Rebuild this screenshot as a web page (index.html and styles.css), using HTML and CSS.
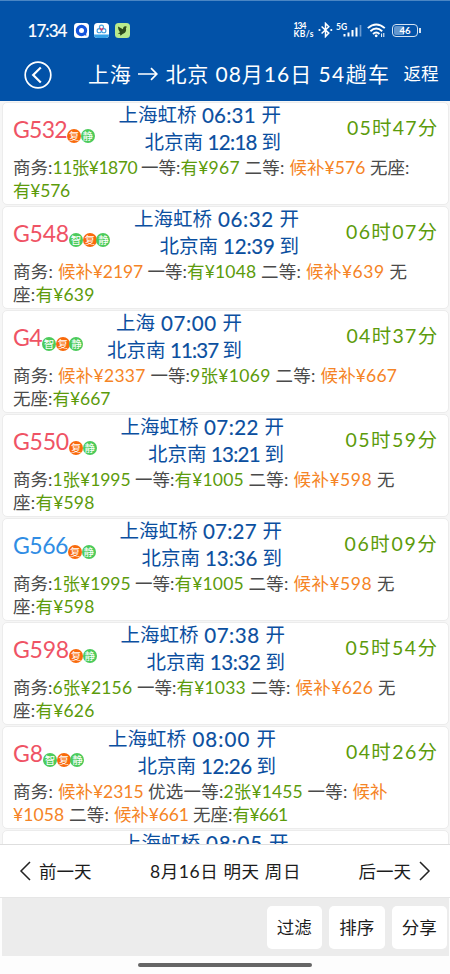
FILE: index.html
```html
<!DOCTYPE html>
<html lang="zh-CN">
<head>
<meta charset="utf-8">
<title>上海 → 北京</title>
<link rel="stylesheet" href="styles.css">
</head>
<body>
<header class="header">
  <div class="status">
    <span class="clock" data-w="39">17:34</span>
    <svg class="app" viewBox="0 0 15 15"><rect width="15" height="15" rx="3.5" fill="#fff"/><circle cx="7.5" cy="7.5" r="4.1" fill="none" stroke="#1454dc" stroke-width="3.2"/><path d="M10 12l2.5.8-.6-3z" fill="#1454dc"/></svg>
    <svg class="app" viewBox="0 0 15 15"><rect width="15" height="15" rx="3.5" fill="#fff"/><path d="M0 11.5h15a3.5 3.5 0 0 1-3.5 3.5h-8A3.5 3.5 0 0 1 0 11.5z" fill="#36a2e8"/><g fill="none" stroke-width="1.1"><circle cx="7.5" cy="4.2" r="2.1" stroke="#4aa8e0"/><circle cx="5.2" cy="7.7" r="2.1" stroke="#3c9ce0"/><circle cx="9.8" cy="7.7" r="2.1" stroke="#3c9ce0"/></g><path d="M5.8 5l1.7 2 1.7-2" fill="none" stroke="#e03c68" stroke-width="1.3"/></svg>
    <svg class="app" viewBox="0 0 15 15"><rect width="15" height="15" rx="3.5" fill="#b9ea8c"/><path d="M3 3.5l5 2.8c0-2 1-3.300 2.600-3.100l1.500.8-1.200.7c.8 3.300-.6 5.500-3 6l-2.400 2.100-.5-1.900-2.200-.4 2.300-1.300C3.800 8 3 5.500 3 3.500z" fill="#2c4a1c"/></svg>
    <span class="grow"></span>
    <span class="rate"><span data-w="16">134</span><span data-w="20.5">KB/s</span></span>
    <svg class="bt" viewBox="0 0 15 16"><path d="M3.600 4.500l7.200 6.600L7.500 14.600V1.400l3.300 3.400-7.200 6.700" fill="none" stroke="#fff" stroke-width="1.5"/><circle cx="1.500" cy="8" r="1.100" fill="#fff"/><circle cx="13.300" cy="8" r="1.100" fill="#fff"/></svg>
    <span class="cell"><span class="gen">5G</span><svg class="bars" viewBox="0 0 19 12"><path d="M1.500 9v2.500M5.500 7.500v4M9.500 5v6.500M13.500 2.500v9" stroke="#fff" stroke-width="2"/><path d="M17.500 0v11.500" stroke="#6c9ad0" stroke-width="1.700"/></svg></span>
    <svg class="wifi" viewBox="0 0 19 15"><g fill="none" stroke="#fff" stroke-width="1.900"><path d="M.8 5.100Q9.200-2.300 17.800 5.100"/><path d="M3.400 8.200Q9.200 3 15.200 8.200"/><path d="M6 11Q9.200 8 12.500 11"/></g><circle cx="9.200" cy="12.800" r="1.400" fill="#fff"/><path d="M14.600 14v-3.500M16.800 10v4" stroke="#fff" stroke-width="1"/></svg>
    <span class="battery"><span class="level">46</span></span>
  </div>
  <div class="title-bar">
    <svg class="back" viewBox="0 0 28 28"><circle cx="14" cy="14" r="12.800" fill="none" stroke="#fff" stroke-width="1.700"/><path d="M16.800 6.500L9.200 14l7.600 7.500" fill="none" stroke="#fff" stroke-width="2.200"/></svg>
    <h1 class="title"><span data-w="50">上海 </span><svg class="arrow" viewBox="0 0 20 14"><path d="M0 7h18.500M13 1.200L18.800 7 13 12.800" fill="none" stroke="#fff" stroke-width="1.700"/></svg><span data-w="50">北京 </span><span data-w="103">08月16日 </span><span data-w="72">54趟车</span></h1>
    <span class="return">返程</span>
  </div>
</header>
<main class="list" id="list"></main>
<nav class="days">
  <span class="day"><svg class="chev" viewBox="0 0 12 20"><path d="M11 1L2 10l9 9" fill="none" stroke="#222" stroke-width="1.500"/></svg>前一天</span>
  <span class="today" data-w="151">8月16日 明天 周日</span>
  <span class="day">后一天<svg class="chev" viewBox="0 0 12 20"><path d="M1 1l9 9-9 9" fill="none" stroke="#222" stroke-width="1.500"/></svg></span>
</nav>
<footer class="tools">
  <button>过滤</button><button>排序</button><button>分享</button>
</footer>
<div class="gesture"><i></i></div>
<script src="app.js"></script>
</body>
</html>
```
FILE: styles.css
```css
* { box-sizing: border-box; }
body {
  margin: 0;
  width: 450px;
  height: 974px;
  overflow: hidden;
  display: flex;
  flex-direction: column;
  background: #fdfdfd;
  font-family: Lato, "Noto Sans CJK SC", sans-serif;
  color: #1c1c1c;
}
svg { display: block; flex: none; }
[data-w] { display: inline-block; white-space: pre; }
.grow { flex: 1; }

.header {
  flex: none;
  height: 101px;
  background: #0252a8;
  border-top: 1px solid #4a86c4;
  color: #fff;
}
.status {
  display: flex;
  align-items: center;
  height: 58px;
  padding: 0 28.500px 0 27.500px;
}
.clock { font-size: 17px; margin-right: 7px; -webkit-text-stroke: .2px; }
.app { width: 15px; height: 15px; margin-right: 5.500px; }
.rate {
  display: flex;
  flex-direction: column;
  font-size: 8.500px;
  line-height: 8px;
  font-weight: 700;
  margin-right: 4px;
}
.bt { width: 15px; height: 16px; margin-right: 3px; }
.cell { display: flex; align-items: flex-start; height: 15px; width: 27px; margin-right: 4px; }
.gen { font-size: 8.500px; line-height: 8px; font-weight: 700; width: 7px; }
.bars { width: 19px; height: 12px; margin-top: 2.500px; }
.wifi { width: 19px; height: 15px; margin-right: 6px; }
.battery {
  position: relative;
  width: 26px;
  height: 13px;
  border: 1.500px solid #d5e2f1;
  border-radius: 4px;
  padding: 1px;
  margin-right: 3.500px;
}
.battery::after {
  content: "";
  position: absolute;
  right: -3.500px;
  top: 3px;
  width: 1.500px;
  height: 5px;
  background: #d5e2f1;
}
.level {
  display: block;
  height: 100%;
  border-radius: 2px;
  background: linear-gradient(90deg, #6497ce 46%, transparent 46%);
  font-size: 9.500px;
  line-height: 9px;
  font-weight: 700;
  text-align: center;
}
.title-bar {
  display: flex;
  align-items: center;
  height: 31px;
  padding: 0 11.500px 0 24px;
}
.back { width: 28px; height: 28px; }
.title {
  display: flex;
  align-items: center;
  margin: -2px 0 0 36px;
  font-size: 21px;
  line-height: 30px;
  font-weight: 400;
}
.arrow { width: 20px; height: 14px; margin-right: 7.500px; }
.return { margin: -2px 0 0 auto; font-size: 17.500px; line-height: 30px; }

.list {
  flex: none;
  height: 743px;
  overflow: hidden;
  padding: 1px 1.500px 0 2px;
  background: #f6f6f6;
}
.card {
  height: 103px;
  margin-bottom: 1px;
  padding: 0 9px 0 10px;
  border: 1px solid #ececec;
  border-radius: 5px;
  background: #fff;
}
.summary { display: flex; height: 53px; margin-top: -1px; }
.train { display: flex; align-items: center; height: 53px; color: #ef5365; }
.train.blue { color: #308de4; }
.number { font-size: 23px; line-height: 30px; }
.badges { display: flex; padding-top: 14px; }
.badge {
  width: 14px;
  height: 14px;
  margin-right: -.3px;
  border-radius: 50%;
  background: #4ccb5c;
  color: #fff;
  font-size: 10.500px;
  line-height: 14px;
  text-align: center;
}
.badge.hot { background: #f96a0c; }
.route {
  margin-left: 24px;
  color: #0b4f9f;
  font-size: 19.500px;
  line-height: 26.500px;
  white-space: nowrap;
}
.route div { display: flex; justify-content: flex-end; height: 26.500px; }
.hour { font-size: 20.500px; -webkit-text-stroke: .15px; }
.last .route { margin-left: 39px; }
.duration { margin-left: auto; color: #5c9b0b; font-size: 19.500px; line-height: 52px; }
.seats { margin-top: .5px; font-size: 17.500px; line-height: 23.500px; color: #4a4a4a; }
.seats div { display: flex; height: 23.500px; }
.ok { color: #5c9b0b; }
.wait { color: #f58426; }

.days {
  flex: none;
  display: flex;
  align-items: center;
  justify-content: space-between;
  height: 54px;
  padding: 0 19px;
  border-top: 1px solid #dedede;
  border-bottom: 1px solid #e6e6e6;
  background: #fff;
  font-size: 17.500px;
}
.day { display: flex; align-items: center; gap: 8px; margin-top: -1px; }
.today { margin: -2px 0 0 1px; }
.chev { width: 12px; height: 20px; }
.tools {
  flex: none;
  display: flex;
  justify-content: flex-end;
  gap: 7px;
  height: 58px;
  margin: 0 1px 0 2px;
  padding: 8px 2px 7px 0;
  background: #ececec;
}
.tools button {
  width: 55.500px;
  padding: 0 0 2px;
  border: 0;
  border-radius: 5px;
  background: #fff;
  color: #1c1c1c;
  font: 17.500px Lato, "Noto Sans CJK SC", sans-serif;
}
.gesture { display: flex; justify-content: center; padding: 7px 1px 0 0; }
.gesture i { width: 174px; height: 4px; border-radius: 2px; background: #666; }
```
FILE: app.js
```js
// Each text run is [text, width, tone]; widths are in px.
const biz = ['商务:', 39.5], bizW = ['商务: ', 45];
const first = ['一等:', 39.5], second = ['二等: ', 45];
const none = ['无座:', 39.5], noneA = ['无', 17.5], noneB = ['座:', 22.5];
const ok = (t, w) => [t, w, 'ok'], wait = (t, w) => [t, w, 'wait'];

const trains = [
  { no: ['G532', 54], tags: '复静', from: ['上海虹桥', '06:31', 65], to: ['12:18', 58.5], time: ['05时47分', 91.5],
    seats: [[biz, ok('11张¥1870 ', 88.5), first, ok('有¥967 ', 64), second, wait('候补¥576 ', 80.5), none], [ok('有¥576', 57)]] },
  { no: ['G548', 56], tags: '智复静', from: ['上海虹桥', '06:32', 67.5], to: ['12:39', 61.5], time: ['06时07分', 92.5],
    seats: [[bizW, wait('候补¥2197 ', 89.5), first, ok('有¥1048 ', 74), second, wait('候补¥639 ', 83.5), noneA], [noneB, ok('有¥639', 59)]] },
  { no: ['G4', 29], tags: '智复静', from: ['上海', '07:00', 67.5], to: ['11:37', 57], time: ['04时37分', 92],
    seats: [[bizW, wait('候补¥2337 ', 92.5), first, ok('9张¥1069 ', 85.5), second, wait('候补¥667', 76.5)], [none, ok('有¥667', 58)]] },
  { no: ['G550', 56], tags: '复静', from: ['上海虹桥', '07:22', 66], to: ['13:21', 58], time: ['05时59分', 93],
    seats: [[biz, ok('1张¥1995 ', 82.5), first, ok('有¥1005 ', 74), second, wait('候补¥598 ', 83.5), noneA], [noneB, ok('有¥598', 59)]] },
  { no: ['G566', 55], tags: '复静', blue: true, from: ['上海虹桥', '07:27', 65], to: ['13:36', 62.5], time: ['06时09分', 94],
    seats: [[biz, ok('1张¥1995 ', 82.5), first, ok('有¥1005 ', 74), second, wait('候补¥598 ', 83.5), noneA], [noneB, ok('有¥598', 59)]] },
  { no: ['G598', 56], tags: '复静', from: ['上海虹桥', '07:38', 67], to: ['13:32', 60.5], time: ['05时54分', 93],
    seats: [[biz, ok('6张¥2156 ', 84.5), first, ok('有¥1033 ', 74), second, wait('候补¥626 ', 82.5), noneA], [noneB, ok('有¥626', 59)]] },
  { no: ['G8', 30], tags: '智复静', from: ['上海虹桥', '08:00', 70.5], to: ['12:26', 60.5], time: ['04时26分', 92.5],
    seats: [[bizW, wait('候补¥2315 ', 90), ['优选一等:', 75.5], ok('2张¥1455 ', 84), ['一等: ', 45], wait('候补', 35)],
      [wait('¥1058 ', 56), second, wait('候补¥661 ', 79), none, ok('有¥661', 55)]] },
  { from: ['上海虹桥', '08:05', 69] }
];

const run = ([text, width, tone]) => `<span class="${tone || ''}" data-w="${width}">${text}</span>`;
const stop = (name, time, width, verb) =>
  `<div>${run([name, name.length * 19.5])}${run([` ${time} `, width, 'hour'])}${run([verb, 19.5])}</div>`;

const card = t => `
  <article class="card">
    <div class="summary">
      <div class="train ${t.blue ? 'blue' : ''}">
        <span class="number" data-w="${t.no[1]}">${t.no[0]}</span>
        <span class="badges">${[...t.tags].map(c => `<span class="badge ${c === '复' ? 'hot' : ''}">${c}</span>`).join('')}</span>
      </div>
      <div class="route">
        ${stop(t.from[0], t.from[1], t.from[2], '开')}
        ${stop('北京南', t.to[0], t.to[1], '到')}
      </div>
      <span class="duration" data-w="${t.time[1]}">${t.time[0]}</span>
    </div>
    <div class="seats">${t.seats.map(line => `<div>${line.map(run).join('')}</div>`).join('')}</div>
  </article>`;

// The card at the list's lower edge shows only its departure.
const partial = t => `
  <article class="card last">
    <div class="summary">
      <div class="train"><span class="number" data-w="70"></span></div>
      <div class="route">${stop(t.from[0], t.from[1], t.from[2], '开')}</div>
    </div>
  </article>`;

document.getElementById('list').innerHTML = trains.map(t => t.no ? card(t) : partial(t)).join('');

// Spread the letters of each run so that it fills its width.
document.querySelectorAll('[data-w]').forEach(el => {
  const width = +el.dataset.w;
  const count = el.textContent.length;
  if (count) el.style.letterSpacing = (width - el.getBoundingClientRect().width) / count + 'px';
  el.style.width = width + 'px';
});
```
